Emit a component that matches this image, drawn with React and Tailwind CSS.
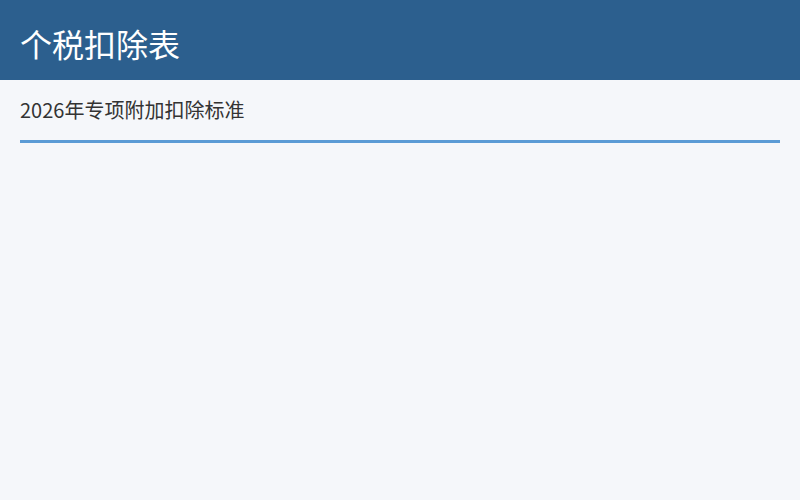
import React from "react";

const font = { fontFamily: '"Noto Sans CJK SC", "Noto Sans", sans-serif' };

const App = () => {
  return (
    <div className="min-h-screen bg-[#f5f7fa]" style={font}>
      {/* HEADER */}
      <header className="h-20 bg-[#2c5f8e] px-5 pt-[6px] flex items-center">
        <h1 className="text-[32px] leading-none text-white font-normal">
          个税扣除表
        </h1>
      </header>

      {/* SECTION */}
      <div className="px-5 pt-4">
        <h2 className="text-[20px] leading-7 text-[#333] pb-4 border-b-[3px] border-[#5b9bd5]">
          2026年专项附加扣除标准
        </h2>
      </div>
    </div>
  );
};

export default App;
